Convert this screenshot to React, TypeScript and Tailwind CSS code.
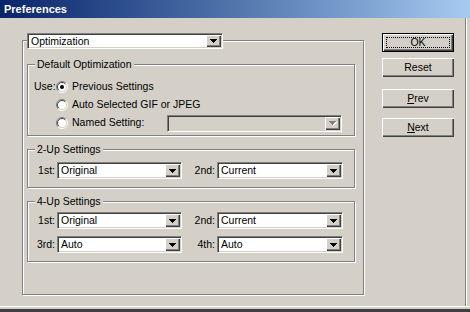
import React from 'react';

const raised = 'shadow-[inset_1px_1px_0_#fff,inset_-1px_-1px_0_#404040,inset_-2px_-2px_0_#808080]';
const sunken =
  'border border-t-[#808080] border-l-[#808080] border-b-white border-r-white p-px shadow-[inset_1px_1px_0_#404040,inset_-1px_-1px_0_#d4d0c8]';
const etched = 'border border-[#808080] shadow-[inset_1px_1px_0_#fff,1px_1px_0_#fff]';

function Arrow({ disabled }: { disabled?: boolean }) {
  const tri = 'M0 0h7v1h-1v1h-1v1h-1v1h-1v-1h-1v-1h-1v-1h-1z';
  return (
    <svg width="8" height="5" viewBox="0 0 8 5" shapeRendering="crispEdges">
      {disabled && <path d={tri} transform="translate(1 1)" fill="#fff" />}
      <path d={tri} fill={disabled ? '#808080' : '#000'} />
    </svg>
  );
}

function Combo({ value, className, disabled }: { value?: string; className: string; disabled?: boolean }) {
  return (
    <div className={`${sunken} flex ${disabled ? 'bg-[#d4d0c8]' : 'bg-white'} ${className}`}>
      <span className="flex-1 pl-[2px] leading-[12px] truncate">{value}</span>
      <div className={`w-[15px] h-full bg-[#d4d0c8] flex items-center justify-center pl-px pt-px ${raised}`}>
        <Arrow disabled={disabled} />
      </div>
    </div>
  );
}

function Radio({ checked }: { checked?: boolean }) {
  return (
    <svg width="12" height="12" viewBox="0 0 12 12" className="shrink-0">
      <circle cx="6" cy="6" r="5" fill="#fff" />
      <path d="M2.1 9.9 A5.5 5.5 0 0 1 9.9 2.1" stroke="#808080" fill="none" />
      <path d="M9.9 2.1 A5.5 5.5 0 0 1 2.1 9.9" stroke="#fff" fill="none" />
      <path d="M2.8 9.2 A4.5 4.5 0 0 1 9.2 2.8" stroke="#404040" fill="none" />
      <path d="M9.2 2.8 A4.5 4.5 0 0 1 2.8 9.2" stroke="#d4d0c8" fill="none" />
      {checked && <circle cx="6" cy="6" r="2" fill="#000" />}
    </svg>
  );
}

function GroupTitle({ children }: { children: React.ReactNode }) {
  return <div className="-mt-[7px] ml-[7px] w-fit px-[2px] bg-[#d4d0c8] leading-[13px]">{children}</div>;
}

function Label({ children, className }: { children: React.ReactNode; className: string }) {
  return <span className={`text-right pr-[2px] leading-[17px] ${className}`}>{children}</span>;
}

function PushButton({ children, isDefault }: { children: React.ReactNode; isDefault?: boolean }) {
  if (isDefault) {
    return (
      <div className="h-[19px] border border-black flex">
        <div className={`flex-1 flex p-[3px] ${raised}`}>
          <div className="flex-1 border border-dotted border-black flex items-center justify-center leading-[11px]">
            {children}
          </div>
        </div>
      </div>
    );
  }
  return (
    <div className={`h-[19px] flex items-center justify-center leading-[13px] ${raised}`}>{children}</div>
  );
}

export default function App() {
  return (
    <div className="w-[470px] h-[312px] bg-[#d4d0c8] flex flex-col overflow-hidden text-black text-[10.5px] font-['Liberation_Sans',Arial,sans-serif]">
      <div className="h-[18px] shrink-0 bg-gradient-to-r from-[#0a246a] to-[#a6caf0] flex items-center pl-[4px]">
        <span className="text-white font-bold text-[11px] leading-[14px]">Preferences</span>
      </div>

      <div className="flex-1 w-[466px] border-r border-r-[#808080] shadow-[1px_0_0_#fff] flex items-start">
        {/* main settings box */}
        <div className={`ml-[22px] mt-[22px] w-[342px] h-[255px] pl-[4px] ${etched}`}>
          <Combo value="Optimization" className="-mt-[8px] w-[196px] h-[16px]" />

          <div className="mt-[15px] flex flex-col gap-[13px]">
            <div className={`w-[328px] h-[72px] ${etched}`}>
              <GroupTitle>Default Optimization</GroupTitle>
              <div className="mt-[7px] pl-[6px] flex flex-col">
                <div className="h-[18px] flex items-center">
                  <span className="w-[22px]">Use:</span>
                  <Radio checked />
                  <span className="ml-[4px]">Previous Settings</span>
                </div>
                <div className="h-[18px] flex items-center pl-[22px]">
                  <Radio />
                  <span className="ml-[4px]">Auto Selected GIF or JPEG</span>
                </div>
                <div className="h-[18px] flex items-center pl-[22px]">
                  <div className="w-[111px] flex items-center">
                    <Radio />
                    <span className="ml-[4px]">Named Setting:</span>
                  </div>
                  <Combo disabled className="w-[175px] h-[17px]" />
                </div>
              </div>
            </div>

            <div className={`w-[328px] h-[39px] ${etched}`}>
              <GroupTitle>2-Up Settings</GroupTitle>
              <div className="mt-[6px] flex">
                <Label className="w-[29px]">1st:</Label>
                <Combo value="Original" className="w-[125px] h-[17px]" />
                <Label className="w-[35px]">2nd:</Label>
                <Combo value="Current" className="w-[126px] h-[17px]" />
              </div>
            </div>

            <div className={`w-[328px] h-[61px] ${etched}`}>
              <GroupTitle>4-Up Settings</GroupTitle>
              <div className="mt-[4px] flex flex-col gap-[7px]">
                <div className="flex">
                  <Label className="w-[29px]">1st:</Label>
                  <Combo value="Original" className="w-[125px] h-[17px]" />
                  <Label className="w-[35px]">2nd:</Label>
                  <Combo value="Current" className="w-[126px] h-[17px]" />
                </div>
                <div className="flex">
                  <Label className="w-[29px]">3rd:</Label>
                  <Combo value="Auto" className="w-[125px] h-[17px]" />
                  <Label className="w-[35px]">4th:</Label>
                  <Combo value="Auto" className="w-[126px] h-[17px]" />
                </div>
              </div>
            </div>
          </div>
        </div>

        {/* dialog buttons */}
        <div className="ml-[18px] mt-[15px] w-[72px] flex flex-col">
          <PushButton isDefault>OK</PushButton>
          <div className="mt-[6px]">
            <PushButton>Reset</PushButton>
          </div>
          <div className="mt-[12px]">
            <PushButton>
              <span>
                <span className="underline underline-offset-1">P</span>rev
              </span>
            </PushButton>
          </div>
          <div className="mt-[10px]">
            <PushButton>
              <span>
                <span className="underline underline-offset-1">N</span>ext
              </span>
            </PushButton>
          </div>
        </div>
      </div>

      <div className="h-[6px] shrink-0 border-t border-t-white border-b-[3px] border-b-[#404040]" />
    </div>
  );
}
